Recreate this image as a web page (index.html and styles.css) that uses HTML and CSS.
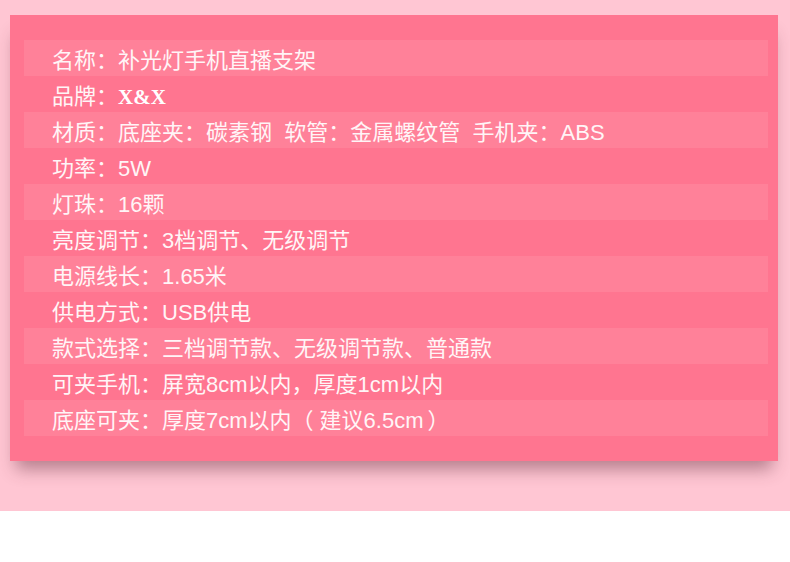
FILE: index.html
```html
<!DOCTYPE html>
<html lang="zh">
<head>
<meta charset="utf-8">
<link rel="stylesheet" href="styles.css">
</head>
<body>
<div class="page">
  <div class="card">
    <div class="row stripe">名称<span class="c">：</span>补光灯手机直播支架</div>
    <div class="row">品牌<span class="c">：</span><span class="brand">X&amp;X</span></div>
    <div class="row stripe">材质<span class="c">：</span>底座夹<span class="c">：</span>碳素钢&nbsp;&nbsp;软管<span class="c">：</span>金属螺纹管&nbsp;&nbsp;手机夹<span class="c">：</span>ABS</div>
    <div class="row">功率<span class="c">：</span>5W</div>
    <div class="row stripe">灯珠<span class="c">：</span>16颗</div>
    <div class="row">亮度调节<span class="c">：</span>3档调节、无级调节</div>
    <div class="row stripe">电源线长<span class="c">：</span>1.65米</div>
    <div class="row">供电方式<span class="c">：</span>USB供电</div>
    <div class="row stripe">款式选择<span class="c">：</span>三档调节款、无级调节款、普通款</div>
    <div class="row">可夹手机<span class="c">：</span>屏宽8cm以内，厚度1cm以内</div>
    <div class="row stripe">底座可夹<span class="c">：</span>厚度7cm以内<span class="po">（</span>建议6.5cm<span class="pc">）</span></div>
  </div>
</div>
</body>
</html>
```
FILE: styles.css
```css
* { box-sizing: border-box; }
html, body { margin: 0; padding: 0; background: #ffffff; }
.page {
  height: 511px;
  background: #ffc6d3;
  padding: 15px 12px 0 10px;
}
.card {
  width: 768px;
  height: 446px;
  background: #ff7590;
  padding: 25px 10px 25px 14px;
  box-shadow: 0 14px 16px -6px rgba(90, 40, 55, 0.45);
}
.row {
  height: 36px;
  line-height: 36px;
  padding-left: 28px;
  color: #fff5f7;
  font-family: "Liberation Sans", "Noto Sans CJK SC", sans-serif;
  font-size: 22px;
  white-space: nowrap;
}
.c {
  font-family: "Noto Sans CJK SC", sans-serif;
}
.po { margin-right: 6px; }
.pc { margin-left: 4px; }
.stripe { background: #ff8199; }
.brand {
  font-family: "Liberation Serif", serif;
  font-weight: bold;
  font-size: 21px;
  color: #ffffff;
}
```
